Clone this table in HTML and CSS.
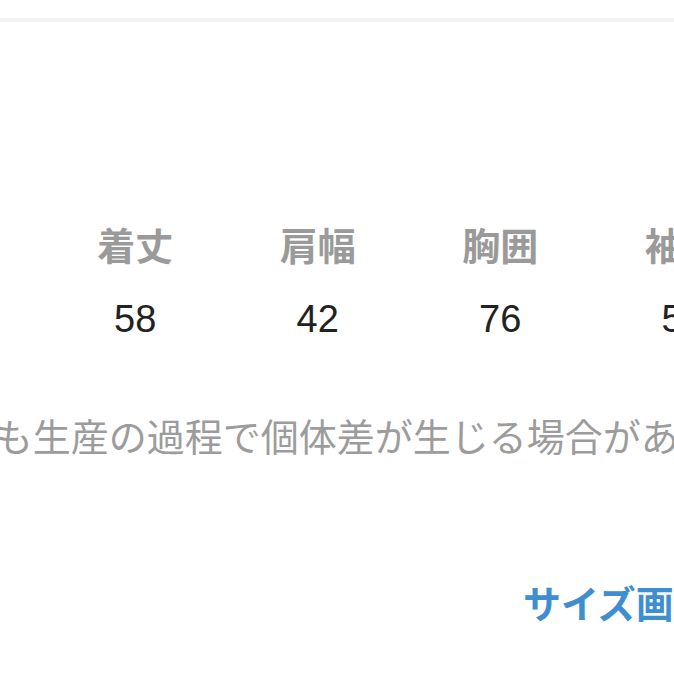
FILE: index.html
```html
<!DOCTYPE html>
<html lang="ja">
<head>
<meta charset="utf-8">
<title>サイズ</title>
<link rel="stylesheet" href="styles.css">
</head>
<body>
<div class="page">
  <div class="divider"></div>
  <div class="size-table">
    <div class="size-row labels">
      <div class="cell">着丈</div>
      <div class="cell">肩幅</div>
      <div class="cell">胸囲</div>
      <div class="cell">袖丈</div>
    </div>
    <div class="size-row values">
      <div class="cell">58</div>
      <div class="cell">42</div>
      <div class="cell">76</div>
      <div class="cell">57</div>
    </div>
  </div>
  <p class="note">同じサイズでも生産の過程で個体差が生じる場合があります。</p>
  <div class="link-row"><a class="size-link" href="#">サイズ画像を見る</a></div>
</div>
</body>
</html>
```
FILE: styles.css
```css
html, body {
  margin: 0;
  padding: 0;
  background: #ffffff;
}
body {
  width: 674px;
  height: 674px;
  overflow: hidden;
}
.page {
  width: 674px;
  padding-top: 18px;
  overflow: hidden;
}
.divider {
  height: 4px;
  background: #f2f2f2;
}
.size-table {
  margin-top: 203px;
  padding-left: 44px;
}
.size-row {
  display: flex;
  white-space: nowrap;
}
.cell {
  flex: 0 0 182.5px;
  text-align: center;
}
.labels .cell {
  font-family: "Noto Sans CJK JP", sans-serif;
  font-size: 38px;
  line-height: 38px;
  font-weight: 700;
  color: #9a9a9a;
}
.values {
  margin-top: 37px;
}
.values .cell {
  font-family: "Liberation Sans", Arial, sans-serif;
  font-size: 38px;
  line-height: 38px;
  color: #222222;
}
.note {
  margin: 78px 0 0 -232px;
  white-space: nowrap;
  font-family: "Noto Sans CJK JP", sans-serif;
  font-size: 38px;
  line-height: 37px;
  font-weight: 400;
  color: #9c9c9c;
}
.link-row {
  margin-top: 130px;
  padding-left: 523px;
  white-space: nowrap;
}
.size-link {
  font-family: "Noto Sans CJK JP", sans-serif;
  font-size: 38px;
  line-height: 38px;
  font-weight: 700;
  color: #3f8ed2;
  text-decoration: none;
}
```
